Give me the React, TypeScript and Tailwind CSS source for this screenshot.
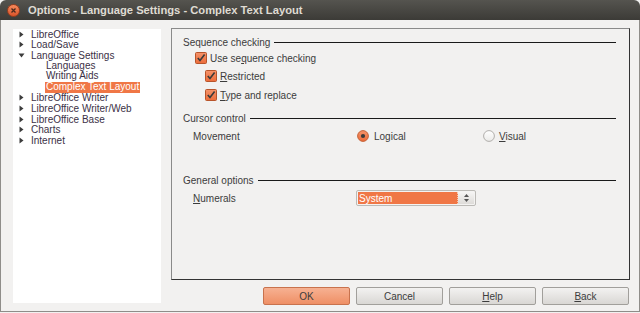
import React from 'react';

const treeItems: { label: string; level: number; arrow?: 'right' | 'down'; selected?: boolean }[] = [
  { label: 'LibreOffice', level: 0, arrow: 'right' },
  { label: 'Load/Save', level: 0, arrow: 'right' },
  { label: 'Language Settings', level: 0, arrow: 'down' },
  { label: 'Languages', level: 1 },
  { label: 'Writing Aids', level: 1 },
  { label: 'Complex Text Layout', level: 1, selected: true },
  { label: 'LibreOffice Writer', level: 0, arrow: 'right' },
  { label: 'LibreOffice Writer/Web', level: 0, arrow: 'right' },
  { label: 'LibreOffice Base', level: 0, arrow: 'right' },
  { label: 'Charts', level: 0, arrow: 'right' },
  { label: 'Internet', level: 0, arrow: 'right' },
];

const Arrow = ({ dir }: { dir: 'right' | 'down' }) => (
  <svg width="7" height="7" viewBox="0 0 7 7" className="shrink-0">
    {dir === 'right' ? (
      <path d="M1.5 0.5 L5.5 3.5 L1.5 6.5 Z" fill="#3c3c3c" />
    ) : (
      <path d="M0.5 1.5 L6.5 1.5 L3.5 5.5 Z" fill="#3c3c3c" />
    )}
  </svg>
);

const CheckBox = () => (
  <svg width="12" height="12" viewBox="0 0 12 12" className="shrink-0">
    <defs>
      <linearGradient id="cbg" x1="0" y1="0" x2="0" y2="1">
        <stop offset="0" stopColor="#f5936a" />
        <stop offset="1" stopColor="#ec6c3a" />
      </linearGradient>
    </defs>
    <rect x="0.5" y="0.5" width="11" height="11" rx="1" fill="url(#cbg)" stroke="#b8542b" />
    <path d="M2.8 6 L5 8.6 L9.6 2.6" fill="none" stroke="#3a3a3a" strokeWidth="1.6" />
  </svg>
);

const Radio = ({ checked }: { checked?: boolean }) => (
  <svg width="12" height="12" viewBox="0 0 12 12" className="shrink-0">
    <defs>
      <linearGradient id="rbo" x1="0" y1="0" x2="0" y2="1">
        <stop offset="0" stopColor="#f5936a" />
        <stop offset="1" stopColor="#ec6c3a" />
      </linearGradient>
      <linearGradient id="rbw" x1="0" y1="0" x2="0" y2="1">
        <stop offset="0" stopColor="#ffffff" />
        <stop offset="1" stopColor="#ebeae8" />
      </linearGradient>
    </defs>
    {checked ? (
      <>
        <circle cx="6" cy="6" r="5.4" fill="url(#rbo)" stroke="#bf5a2e" strokeWidth="0.9" />
        <circle cx="6" cy="6" r="2.1" fill="#3a3a3a" />
      </>
    ) : (
      <circle cx="6" cy="6" r="5.4" fill="url(#rbw)" stroke="#a9a7a4" strokeWidth="0.9" />
    )}
  </svg>
);

const U = ({ children }: { children: React.ReactNode }) => <span className="underline underline-offset-[1px]">{children}</span>;

const Section = ({ title }: { title: string }) => (
  <div className="flex items-center h-[14px] pl-[11px] pr-[13px]">
    <span className="whitespace-nowrap">{title}</span>
    <div className="flex-1 ml-[4px] h-px bg-[#1a1a1a]" />
  </div>
);

const DlgButton = ({ children, primary }: { children: React.ReactNode; primary?: boolean }) => (
  <div
    className={`w-[87px] h-[18px] flex items-center justify-center rounded-[2px] border ${
      primary
        ? 'border-[#c8724d] bg-gradient-to-b from-[#f6b192] to-[#ef8f65]'
        : 'border-[#a19f9b] bg-gradient-to-b from-[#f3f2f1] to-[#d9d7d4]'
    } text-[#3c3c3c]`}
  >
    {children}
  </div>
);

export default function App() {
  return (
    <div className="w-[640px] h-[313px] bg-[#f2f1f0] font-['Liberation_Sans',sans-serif] text-[10px] text-[#3c3c3c] overflow-hidden">
      {/* Title bar */}
      <div className="h-[20px] rounded-t-[6px] bg-gradient-to-b from-[#55544f] to-[#3c3b37] flex items-center">
        <div className="ml-[7px] w-[13px] h-[13px] rounded-full bg-gradient-to-b from-[#f68a5c] to-[#d9532a] border border-[#9b3d1d] flex items-center justify-center">
          <svg width="7" height="7" viewBox="0 0 7 7">
            <path d="M1.5 1.5 L5.5 5.5 M5.5 1.5 L1.5 5.5" stroke="#4a2a1e" strokeWidth="1.3" />
          </svg>
        </div>
        <span className="ml-[8px] text-[11.2px] font-bold text-[#dfdbd2] whitespace-nowrap">
          Options - Language Settings - Complex Text Layout
        </span>
      </div>

      {/* Body */}
      <div className="h-[292px] border-x border-b border-[#8f8d89] flex pl-[12px] pt-[8px]">
        {/* Tree */}
        <div className="mt-[1px] w-[148px] h-[274px] bg-white text-[#3b3146] flex flex-col">
          {treeItems.map((it) => (
            <div key={it.label} className="h-[10.6px] flex items-center whitespace-nowrap">
              {it.level === 0 ? (
                <>
                  <div className="w-[5px]" />
                  <Arrow dir={it.arrow ?? 'right'} />
                  <span className="ml-[6px]">{it.label}</span>
                </>
              ) : (
                <span
                  className={`ml-[32px] px-[1px] leading-[10.6px] ${
                    it.selected ? 'bg-[#f07746] text-white' : ''
                  }`}
                >
                  {it.label}
                </span>
              )}
            </div>
          ))}
        </div>

        {/* Right column */}
        <div className="ml-[10px] w-[459px] flex flex-col">
          <div className="h-[252px] border border-[#8a8a8a] border-r-[#333333] border-b-[#333333] flex flex-col">
            <div className="mt-[6px]">
              <Section title="Sequence checking" />
            </div>
            <div className="mt-[2px] h-[14px] flex items-center pl-[23px]">
              <CheckBox />
              <span className="ml-[3px]">
                Use se<U>q</U>uence checking
              </span>
            </div>
            <div className="mt-[4px] h-[14px] flex items-center pl-[33px]">
              <CheckBox />
              <span className="ml-[3px]">
                <U>R</U>estricted
              </span>
            </div>
            <div className="mt-[5px] h-[14px] flex items-center pl-[33px]">
              <CheckBox />
              <span className="ml-[3px]">
                <U>T</U>ype and replace
              </span>
            </div>
            <div className="mt-[9px]">
              <Section title="Cursor control" />
            </div>
            <div className="mt-[4px] h-[14px] flex items-center pl-[21px]">
              <span className="w-[164px]">Movement</span>
              <Radio checked />
              <span className="ml-[5px] w-[109px]">Logical</span>
              <Radio />
              <span className="ml-[4px]">
                <U>V</U>isual
              </span>
            </div>
            <div className="mt-[30px]">
              <Section title="General options" />
            </div>
            <div className="mt-[3px] h-[16px] flex items-center pl-[21px]">
              <span className="w-[163px]">
                <U>N</U>umerals
              </span>
              <div className="w-[120px] h-[16px] rounded-[2px] border border-[#bcbab6] bg-[#f4f3f2] flex items-stretch p-[1px]">
                <div className="flex-1 bg-[#f07746] text-white flex items-center pl-[1px] border-r border-dotted border-[#f8c8b0]">
                  System
                </div>
                <div className="w-[16px] bg-gradient-to-b from-[#f6f5f4] to-[#dedcd9] flex flex-col items-center justify-center gap-[2px]">
                  <svg width="5" height="3" viewBox="0 0 5 3">
                    <path d="M0 3 L2.5 0 L5 3 Z" fill="#555" />
                  </svg>
                  <svg width="5" height="3" viewBox="0 0 5 3">
                    <path d="M0 0 L5 0 L2.5 3 Z" fill="#555" />
                  </svg>
                </div>
              </div>
            </div>
          </div>

          {/* Buttons */}
          <div className="mt-[7px] flex justify-end gap-[6px] pr-[1px]">
            <DlgButton primary>OK</DlgButton>
            <DlgButton>Cancel</DlgButton>
            <DlgButton>
              <span>
                <U>H</U>elp
              </span>
            </DlgButton>
            <DlgButton>
              <span>
                <U>B</U>ack
              </span>
            </DlgButton>
          </div>
        </div>
      </div>
    </div>
  );
}
